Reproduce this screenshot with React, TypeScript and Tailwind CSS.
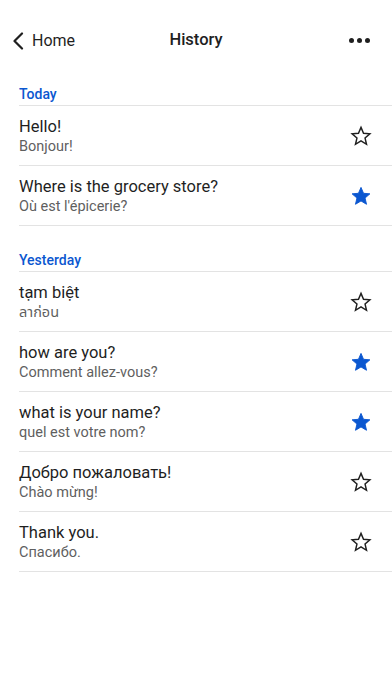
import React from 'react';

type Entry = { source: string; target: string; starred: boolean };

const sections: { label: string; items: Entry[] }[] = [
  {
    label: 'Today',
    items: [
      { source: 'Hello!', target: 'Bonjour!', starred: false },
      { source: 'Where is the grocery store?', target: "Où est l'épicerie?", starred: true },
    ],
  },
  {
    label: 'Yesterday',
    items: [
      { source: 'tạm biệt', target: 'ลาก่อน', starred: false },
      { source: 'how are you?', target: 'Comment allez-vous?', starred: true },
      { source: 'what is your name?', target: 'quel est votre nom?', starred: true },
      { source: 'Добро пожаловать!', target: 'Chào mừng!', starred: false },
      { source: 'Thank you.', target: 'Спасибо.', starred: false },
    ],
  },
];

const StarIcon = ({ filled }: { filled: boolean }) => (
  <svg width="22" height="22" viewBox="0 0 24 24">
    <path
      d="M12 2.6l2.75 6.45 6.95.6-5.28 4.58 1.6 6.82L12 17.4l-6.02 3.65 1.6-6.82L2.3 9.65l6.95-.6z"
      fill={filled ? '#0b57d0' : 'none'}
      stroke={filled ? '#0b57d0' : '#1f1f1f'}
      strokeWidth={filled ? 1 : 1.6}
      strokeLinejoin="miter"
    />
  </svg>
);

export default function App() {
  return (
    <div
      className="w-[392px] h-[696px] bg-white text-[#1f1f1f] overflow-hidden"
      style={{ fontFamily: 'Roboto, "Noto Sans", "Noto Sans Thai", sans-serif' }}
    >
      {/* Header */}
      <div className="h-[80px] flex items-center px-3 relative">
        <div className="flex items-center gap-[8px] pt-[1px]">
          <svg width="12" height="18" viewBox="0 0 12 18">
            <path d="M10 1.5L2.5 9l7.5 7.5" fill="none" stroke="#1f1f1f" strokeWidth="2.2" strokeLinecap="round" strokeLinejoin="round" />
          </svg>
          <span className="text-[16px] leading-none">Home</span>
        </div>
        <div className="absolute left-0 right-0 text-center text-[16.5px] font-medium leading-none pointer-events-none">
          History
        </div>
        <div className="ml-auto flex gap-[3px] pr-[10px]">
          <span className="w-[5px] h-[5px] rounded-full bg-[#1f1f1f]" />
          <span className="w-[5px] h-[5px] rounded-full bg-[#1f1f1f]" />
          <span className="w-[5px] h-[5px] rounded-full bg-[#1f1f1f]" />
        </div>
      </div>

      {sections.map((section, si) => (
        <div key={section.label} className={si === 0 ? '' : 'mt-[20px]'}>
          <div className="ml-[19px] h-[26px] pt-[3px] flex items-center text-[14px] font-medium text-[#0b57d0] border-b border-[#e3e3e3]">
            {section.label}
          </div>
          {section.items.map((item) => (
            <div
              key={item.source}
              className="ml-[19px] h-[60px] flex items-center border-b border-[#e3e3e3]"
            >
              <div className="flex-1 flex flex-col gap-[1px] pt-[1px]">
                <div className="text-[16.5px] leading-[20px]">{item.source}</div>
                <div className="text-[14.5px] leading-[18px] text-[#5f5f5f]">{item.target}</div>
              </div>
              <div className="w-[22px] mr-[20px] flex justify-center">
                <StarIcon filled={item.starred} />
              </div>
            </div>
          ))}
        </div>
      ))}
    </div>
  );
}
